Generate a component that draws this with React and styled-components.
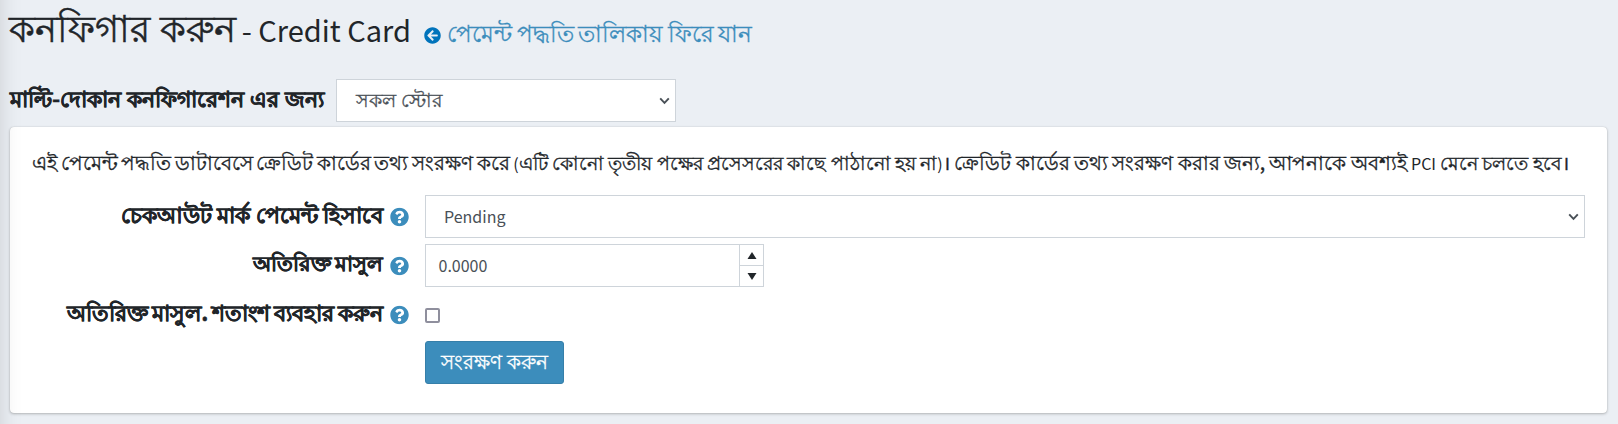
import React from "react";
import styled, { createGlobalStyle } from "styled-components";

const GlobalStyle = createGlobalStyle`
  *, *::before, *::after { box-sizing: border-box; }
  body {
    margin: 0;
    background: #ebeff4;
    color: #212529;
    font-family: "Noto Sans CJK JP", "Noto Sans", sans-serif;
    font-size: 16px;
    overflow: hidden;
  }
`;

const Page = styled.main`
  position: relative;
  height: 424px;
  padding: 0 11px 0 9px;
  overflow: hidden;
`;

const SidebarShadow = styled.div`
  position: absolute;
  top: -60px;
  bottom: -60px;
  left: -60px;
  width: 52px;
  box-shadow: 0 14px 28px rgba(0, 0, 0, 0.25);
  pointer-events: none;
`;

const Text = styled.span`
  font-size: ${(p) => p.$size}px;
  word-spacing: ${(p) => p.$word || 0}px;
  white-space: nowrap;
  -webkit-text-stroke: ${(p) => p.$stroke || 0}px currentColor;
`;

const Title = styled.h1`
  display: flex;
  align-items: baseline;
  margin: 0;
  height: 79px;
  padding-top: 6px;
  line-height: 40px;
  font-weight: 400;
`;

const TitleSuffix = styled(Text)`
  margin-left: 6px;
`;

const BackLink = styled.a`
  display: flex;
  align-items: baseline;
  margin-left: 13px;
  gap: 6px;
  color: #3c8dbc;
  text-decoration: none;

  svg {
    width: 17px;
    height: 17px;
    transform: translateY(2px);
  }
`;

const StoreScope = styled.div`
  display: flex;
  align-items: center;
  height: 43px;
`;

const Label = styled.label`
  display: block;
  padding-bottom: 4px;
  line-height: 39px;
  font-weight: 700;
`;

const ScopeLabel = styled(Label)`
  width: 327px;
  padding-left: 1px;
`;

const SelectBox = styled.div`
  display: flex;
  align-items: center;
  justify-content: space-between;
  width: ${(p) => p.$width || "100%"};
  height: 43px;
  padding: 0 5px 0 18px;
  border: 1px solid #ced4da;
  background: #fff;
  color: #495057;
  line-height: 41px;

  svg { width: 11px; height: 8px; }
`;

const RaisedText = styled(Text)`
  padding-bottom: 4px;
  line-height: 37px;
`;

const StoreName = styled(RaisedText)`
  padding-left: 1px;
`;

const Card = styled.section`
  height: 286px;
  margin: 5px 0 0 1px;
  padding: 17px 22px 0;
  border-radius: 4px;
  background: #fff;
  box-shadow: 0 0 1px rgba(0, 0, 0, 0.2), 0 1px 3px rgba(0, 0, 0, 0.24);
`;

const Description = styled.p`
  margin: 0;
  height: 51px;
  line-height: 36px;
  white-space: nowrap;
`;

const FormRow = styled.div`
  display: grid;
  grid-template-columns: 377px 1fr;
  column-gap: 16px;
  align-items: center;
  height: 49px;
  padding-bottom: 6px;
`;

const SubmitRow = styled(FormRow)`
  margin-top: -1px;
`;

const LabelCell = styled.div`
  display: flex;
  align-items: center;
  justify-content: flex-end;
  gap: 7px;
  height: 43px;

  svg {
    width: 19px;
    height: 19px;
    flex: none;
    transform: translateY(0.5px);
  }
`;

const NumberBox = styled.div`
  display: flex;
  width: 339px;
  height: 43px;
  border: 1px solid #ced4da;
  background: #fff;
  color: #495057;
`;

const NumberValue = styled.div`
  flex: 1;
  padding-left: 12.5px;
  line-height: 41px;
`;

const Spinner = styled.div`
  display: grid;
  grid-template-rows: 20px 21px;
  width: 24px;
  border-left: 1px solid #ced4da;
`;

const SpinButton = styled.div`
  display: flex;
  align-items: center;
  justify-content: center;

  & + & { border-top: 1px solid #ced4da; }
  svg { width: 10px; height: 7px; }
`;

const Checkbox = styled.div`
  width: 15px;
  height: 15px;
  margin-top: 1px;
  border: 2px solid #8f8f9d;
  border-radius: 2px;
  background: #fff;
`;

const SaveButton = styled.button`
  grid-column: 2;
  justify-self: start;
  display: flex;
  justify-content: center;
  width: 139px;
  height: 43px;
  padding: 0;
  border: 1px solid #367fa9;
  border-radius: 3px;
  background: #3c8dbc;
  color: #fff;
  font-family: inherit;
`;

const Chevron = () => (
  <svg viewBox="0 0 11 8" fill="none" stroke="#495057" strokeWidth="1.9">
    <path d="M1.2 1.4 5.5 5.9 9.8 1.4" />
  </svg>
);

const HelpIcon = () => (
  <svg viewBox="0 0 512 512" fill="#3c8dbc">
    <path d="M504 256c0 137-111 248-248 248S8 393 8 256C8 119.100 119 8 256 8s248 111.100 248 248zM262.700 90c-54.500 0-89.300 23-116.500 63.800-3.500 5.300-2.400 12.400 2.700 16.300l34.700 26.300c5.200 3.900 12.600 3 16.700-2.100 17.900-22.700 30.100-35.800 57.300-35.800 20.400 0 45.700 13.100 45.700 33 0 15-12.400 22.700-32.500 34C247.100 238.500 216 254.900 216 296v4c0 6.600 5.400 12 12 12h56c6.600 0 12-5.400 12-12v-1.300c0-28.500 83.200-29.600 83.200-106.700 0-58-60.200-102-116.500-102zM256 338c-25.400 0-46 20.600-46 46s20.600 46 46 46 46-20.600 46-46-20.600-46-46-46z" />
  </svg>
);

const BackIcon = () => (
  <svg viewBox="0 0 512 512" fill="#0073bb">
    <path d="M256 504C119 504 8 393 8 256S119 8 256 8s248 111 248 248-111 248-248 248zm28.900-143.600L209.400 288H392c13.300 0 24-10.700 24-24v-16c0-13.300-10.700-24-24-24H209.400l75.500-72.400c9.700-9.300 9.900-24.800.4-34.300l-11-10.900c-9.400-9.400-24.600-9.400-33.900 0L107.700 239c-9.400 9.400-9.400 24.600 0 33.900l132.700 132.700c9.400 9.400 24.600 9.400 33.900 0l11-10.900c9.500-9.500 9.300-25-.4-34.300z" />
  </svg>
);

const Triangle = ({ down }) => (
  <svg viewBox="0 0 10 7" fill="#212529">
    <path d={down ? "M.5 0h9L5 7z" : "M.5 7h9L5 0z"} />
  </svg>
);

const Field = ({ label, size, word, children }) => (
  <FormRow>
    <LabelCell>
      <Label><Text $size={size} $word={word} $stroke={0.4}>{label}</Text></Label>
      <HelpIcon />
    </LabelCell>
    {children}
  </FormRow>
);

export default function App() {
  return (
    <>
      <GlobalStyle />
      <Page>
        <Title>
          <Text $size={37.1} $word={1.5} $stroke={0.5}>কনফিগার করুন</Text>
          <TitleSuffix $size={29}>- Credit Card</TitleSuffix>
          <BackLink>
            <BackIcon />
            <Text $size={22.5} $word={-0.5} $stroke={0.3}>পেমেন্ট পদ্ধতি তালিকায় ফিরে যান</Text>
          </BackLink>
        </Title>
        <StoreScope>
          <ScopeLabel>
            <Text $size={22.3} $word={0.9} $stroke={0.4}>মাল্টি-দোকান কনফিগারেশন এর জন্য</Text>
          </ScopeLabel>
          <SelectBox $width="340px">
            <StoreName $size={19.4} $word={1} $stroke={0.3}>সকল স্টোর</StoreName>
            <Chevron />
          </SelectBox>
        </StoreScope>
        <Card>
          <Description>
            <Text $size={19.55} $word={-0.8} $stroke={0.35}>এই পেমেন্ট পদ্ধতি ডাটাবেসে ক্রেডিট কার্ডের তথ্য সংরক্ষণ করে </Text>
            <Text $size={16}>(</Text>
            <Text $size={19.4} $stroke={0.35}>এটি কোনো তৃতীয় পক্ষের প্রসেসরের কাছে পাঠানো হয় না</Text>
            <Text $size={16}>)</Text>
            <Text $size={19.5} $word={-0.1} $stroke={0.35}>। ক্রেডিট কার্ডের তথ্য সংরক্ষণ করার জন্য, আপনাকে অবশ্যই </Text>
            <Text $size={16}>PCI </Text>
            <Text $size={19.3} $word={0.2} $stroke={0.35}>মেনে চলতে হবে।</Text>
          </Description>
          <Field label="চেকআউট মার্ক পেমেন্ট হিসাবে" size={22} word={0.5}>
            <SelectBox>
              <Text $size={16}>Pending</Text>
              <Chevron />
            </SelectBox>
          </Field>
          <Field label="অতিরিক্ত মাসুল" size={21} word={-0.5}>
            <NumberBox>
              <NumberValue>0.0000</NumberValue>
              <Spinner>
                <SpinButton><Triangle /></SpinButton>
                <SpinButton><Triangle down /></SpinButton>
              </Spinner>
            </NumberBox>
          </Field>
          <Field label="অতিরিক্ত মাসুল. শতাংশ ব্যবহার করুন" size={21.9} word={-1.1}>
            <Checkbox />
          </Field>
          <SubmitRow>
            <SaveButton>
              <RaisedText $size={20.1} $word={1} $stroke={0.3}>সংরক্ষণ করুন</RaisedText>
            </SaveButton>
          </SubmitRow>
        </Card>
        <SidebarShadow />
      </Page>
    </>
  );
}
